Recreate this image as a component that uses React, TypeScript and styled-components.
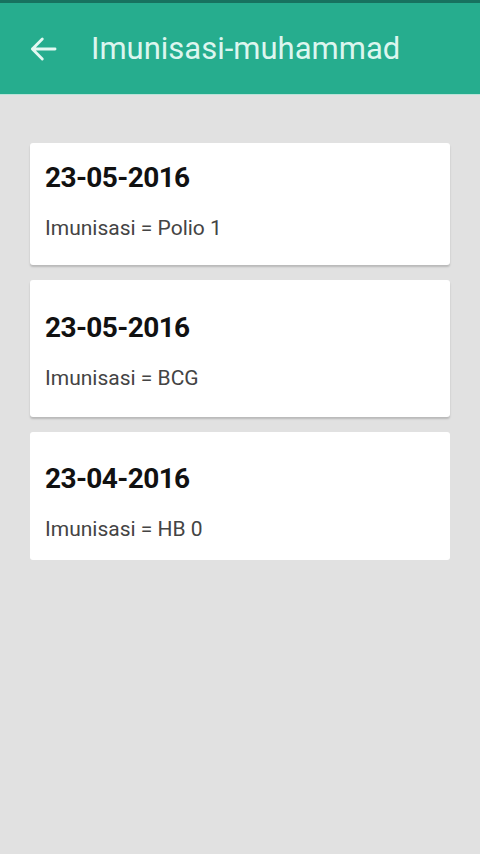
import React from 'react';
import styled, { createGlobalStyle } from 'styled-components';

const GlobalStyle = createGlobalStyle`
  html, body {
    margin: 0;
    padding: 0;
    background: #e1e1e1;
    font-family: Roboto, "Noto Sans", Arial, sans-serif;
  }
`;

// Whole screen
const Screen = styled.div`
  width: 480px;
  height: 854px;
  overflow: hidden;
  display: flex;
  flex-direction: column;
  background: #e1e1e1;
`;

// Green app bar
const Toolbar = styled.header`
  height: 91px;
  border-top: 3px solid #17725f;
  background: #26ad8e;
  display: flex;
  align-items: center;
  padding-left: 26px;
  gap: 31px;
  box-shadow: 0 1px 0 #b9e3d8;
`;

const BackButton = styled.button`
  width: 34px;
  height: 34px;
  padding: 0;
  border: none;
  background: none;
  display: flex;
  align-items: center;
  justify-content: center;
  cursor: pointer;
`;

const Title = styled.h1`
  margin: 0;
  font-size: 31px;
  font-weight: 400;
  color: #dcf6ef;
  line-height: 36px;
`;

// List of records
const List = styled.main`
  display: flex;
  flex-direction: column;
  gap: 15px;
  padding: 49px 30px 0;
`;

const Card = styled.div<{ $top: number; $height: number; $last?: boolean }>`
  background: #fff;
  border-radius: 3px;
  height: ${(p) => p.$height}px;
  box-sizing: border-box;
  padding: ${(p) => p.$top}px 15px 0;
  box-shadow: ${(p) => (p.$last ? 'none' : '0 2px 2px rgba(0, 0, 0, 0.18)')};
`;

const CardDate = styled.div`
  font-size: 28px;
  font-weight: 700;
  color: #111;
  line-height: 34px;
  letter-spacing: -0.6px;
`;

const CardText = styled.div`
  margin-top: 21px;
  font-size: 21px;
  color: #444;
  line-height: 24px;
`;

const records = [
  { date: '23-05-2016', name: 'Polio 1', top: 18, height: 122 },
  { date: '23-05-2016', name: 'BCG', top: 31, height: 137 },
  { date: '23-04-2016', name: 'HB 0', top: 30, height: 128 },
];

const App: React.FC = () => {
  return (
    <Screen>
      <GlobalStyle />
      <Toolbar>
        <BackButton aria-label="back">
          <svg width="34" height="34" viewBox="0 0 24 24" fill="none">
            <path
              d="M20.5 12H4.5M11.5 5L4.5 12L11.5 19"
              stroke="#e4f8f2"
              strokeWidth="2"
              strokeLinecap="round"
              strokeLinejoin="round"
            />
          </svg>
        </BackButton>
        <Title>Imunisasi-muhammad</Title>
      </Toolbar>
      <List>
        {records.map((r, i) => (
          <Card
            key={i}
            $top={r.top}
            $height={r.height}
            $last={i === records.length - 1}
          >
            <CardDate>{r.date}</CardDate>
            <CardText>Imunisasi = {r.name}</CardText>
          </Card>
        ))}
      </List>
    </Screen>
  );
};

export default App;
